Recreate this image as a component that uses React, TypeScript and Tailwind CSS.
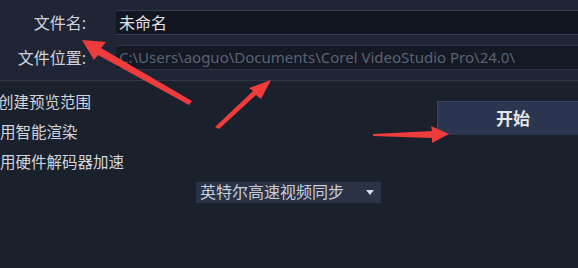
import React from "react";

const font = { fontFamily: '"Noto Sans", "Noto Sans CJK SC", sans-serif' };

export default function App() {
  return (
    <div
      className="relative w-[578px] h-[268px] overflow-hidden bg-[#1b202d] text-[#d4d7de]"
      style={font}
    >
      {/* top form */}
      <div className="bg-[#1f2535] pt-[10px] border-b border-[#2f364a]">
        <div className="flex items-center h-[25px]">
          <div className="w-[116px] pr-[30px] text-right text-[16px] text-[#cfd2d9] whitespace-nowrap">文件名:</div>
          <div className="flex-1 h-[25px] bg-[#121620] border-y border-[#343c52] flex items-center pl-[3px] text-[16px] text-[#e1e3e8]">
            未命名
          </div>
        </div>
        <div className="flex items-center h-[25px] mt-[10px]">
          <div className="w-[116px] pr-[30px] text-right text-[16px] text-[#cfd2d9] whitespace-nowrap">文件位置:</div>
          <div className="flex-1 h-[25px] bg-[#141925] border-y border-[#2c3447] flex items-center pl-[3px] text-[15px] text-[#5b6273] whitespace-nowrap">
            C:\Users\aoguo\Documents\Corel VideoStudio Pro\24.0\
          </div>
        </div>
        <div className="h-[10px]" />
      </div>

      {/* options */}
      <div className="flex">
        <div className="flex flex-col pt-[11px] gap-[10px] text-[15.5px] text-[#d2d5dc] w-[437px]">
          <div className="h-[20px] leading-[20px] -ml-[2px] whitespace-nowrap">创建预览范围</div>
          <div className="h-[20px] leading-[20px] whitespace-nowrap">用智能渲染</div>
          <div className="h-[20px] leading-[20px] whitespace-nowrap">用硬件解码器加速</div>
          <div className="pl-[196px]">
            <div className="w-[185px] h-[21px] bg-[#2a3246] flex items-center justify-between pl-[4px] pr-[7px] text-[16px] text-[#c9cdd6]">
              <span className="whitespace-nowrap leading-[21px]">英特尔高速视频同步</span>
              <span className="w-0 h-0 border-l-[4px] border-r-[4px] border-t-[5px] border-l-transparent border-r-transparent border-t-[#d8dbe2]" />
            </div>
          </div>
        </div>
        <div className="flex-1 pt-[20px]">
          <div className="h-[34px] bg-[#2d3650] border-t border-l border-[#394260] flex items-center justify-center pl-[10px] text-[17px] font-semibold text-[#e4e6ea]">
            开始
          </div>
        </div>
      </div>

      {/* red annotation arrows */}
      <svg className="absolute inset-0 pointer-events-none" width="578" height="268" viewBox="0 0 578 268">
        <g fill="#ee3b3b">
          <polygon points="192,101 189,105 98,55 94,60 82,40 106,42 101,48" />
          <polygon points="215,127 219,129 256,95 261,99 271,80 249,88 253,91" />
          <polygon points="373,136 373,134 432,131 431,126 449,134 432,143 432,138" />
        </g>
      </svg>
    </div>
  );
}
